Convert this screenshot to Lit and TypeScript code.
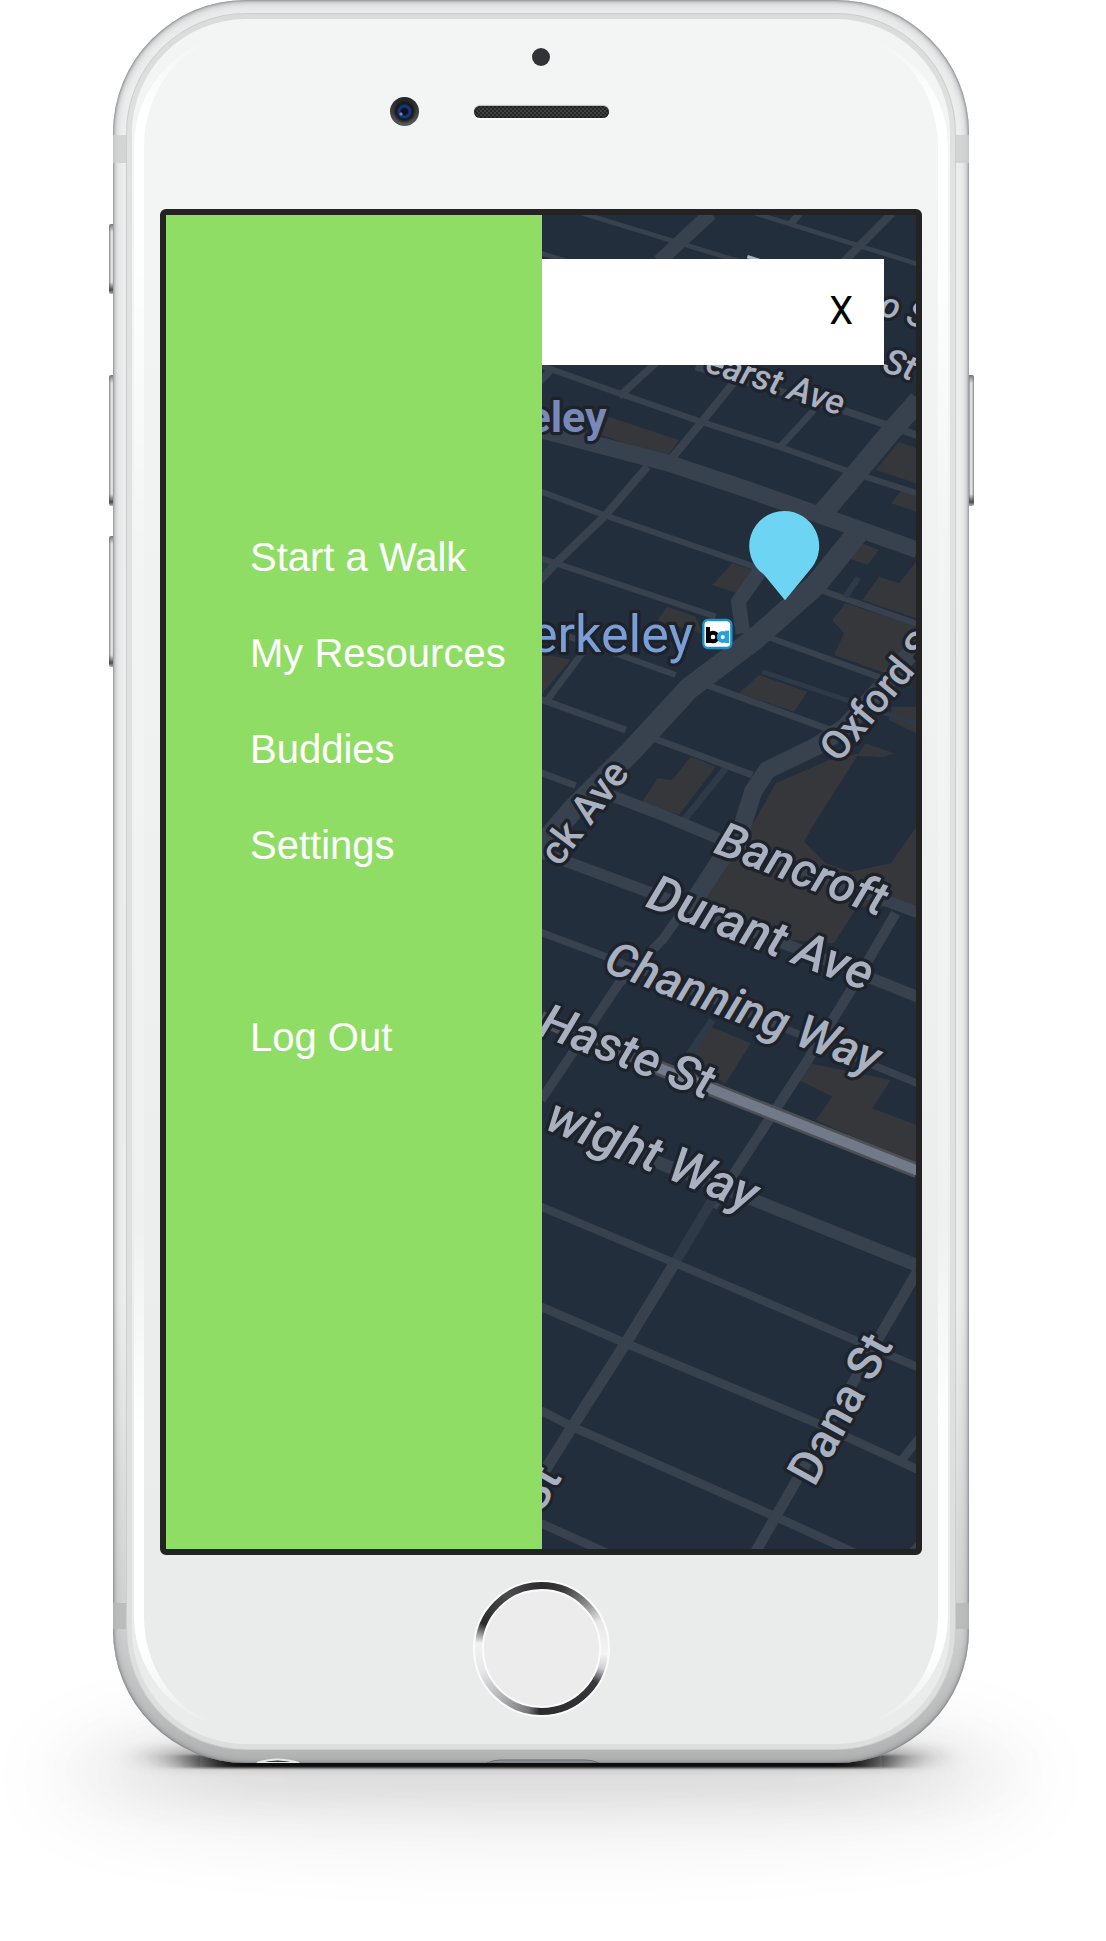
import { LitElement, html, css, svg } from "lit";
import { customElement } from "lit/decorators.js";

interface Road {
  d: string;
  w: number;
  faint?: boolean;
}

interface Label {
  text: string;
  x: number;
  y: number;
  angle: number;
  size: number;
  end?: boolean;
  kind?: string;
}

const BLOCKS: string[] = [
  "240,650 450,720 415,770 215,705",
  "1110,725 1162,745 1162,850 1040,810",
  "1125,860 1162,875 1162,935 1087,910",
  "610,1090 680,1112 625,1180 550,1155",
  "415,1220 500,1250 520,1300 385,1262",
  "1000,1030 1050,1050 1015,1095 960,1075",
  "1050,1130 1110,1150 1162,1085 1162,1255 1000,1200",
  "950,1210 1162,1280 1162,1330 1070,1420 915,1365 945,1300 910,1260",
  "690,1425 835,1475 795,1535 630,1480",
  "485,1670 560,1700 450,1845 340,1805 385,1735 430,1740",
  "36,1360 125,1380 36,1485",
  "1090,1520 1162,1520 1162,1600 1080,1560",
  "1010,1630 1095,1660 1060,1672 985,1668",
  "990,1660 850,1880 825,1925 890,1990 965,2015 1085,1990 1162,1880 1162,2120 985,2120 915,2230 790,2220 525,2100 600,1990 690,1840 740,1750 900,1680",
  "545,2480 665,2530 590,2650 475,2585",
  "840,2590 1085,2640 1030,2725 1162,2775 1162,2895 860,2760 910,2690 810,2640",
];

const ROADS: Road[] = [
  { d: "M160 40 700 205", w: 14 },
  { d: "M680 40 1165 192", w: 14 },
  { d: "M36 160 110 182", w: 14 },
  { d: "M545 40 390 185", w: 42 },
  { d: "M812 40 785 72", w: 22 },
  { d: "M1088 40 920 210", w: 24 },
  { d: "M70 505 30 548", w: 22 },
  { d: "M385 485 270 590", w: 22 },
  { d: "M665 485 515 670 420 785", w: 24 },
  { d: "M355 800 230 945 80 1090 30 1145", w: 24 },
  { d: "M855 630 752 742", w: 20 },
  { d: "M36 497 270 580 515 665 750 740 960 815 1165 880", w: 18 },
  { d: "M500 500 940 630 1165 706", w: 22 },
  { d: "M36 875 225 945 690 1105", w: 18 },
  { d: "M36 1075 560 1250", w: 18 },
  { d: "M860 1165 1165 1272", w: 18 },
  { d: "M700 1305 1060 1435", w: 18 },
  { d: "M120 1310 440 1425", w: 18 },
  { d: "M165 1352 55 1500", w: 20 },
  { d: "M520 1450 910 1592", w: 20 },
  { d: "M36 1498 290 1590", w: 20 },
  { d: "M360 1610 670 1725", w: 20 },
  { d: "M700 1415 980 1510 1165 1572", w: 14, faint: true },
  { d: "M988 1133 948 1192", w: 18, faint: true },
  { d: "M590 1705 465 1860", w: 20, faint: true },
  { d: "M550 2460 470 2580", w: 22, faint: true },
  { d: "M36 1718 140 1757", w: 20 },
  { d: "M230 1780 400 1845 560 1912 1165 2137", w: 34 },
  { d: "M60 1965 370 2080 790 2240 1165 2390", w: 34 },
  { d: "M36 2197 230 2270 790 2495 1165 2650", w: 22 },
  { d: "M36 690 420 790 660 870 900 955 1165 1050", w: 50 },
  { d: "M1170 600 1090 690 965 840 880 940", w: 62 },
  { d: "M985 1000 860 1155 680 1315 480 1465 310 1650 130 1830 20 1960", w: 66 },
  { d: "M710 1090 628 1205 642 1300", w: 44 },
  { d: "M1165 1335 1060 1460 950 1580 860 1640 715 1710 672 1775 640 1880 490 2110", w: 54 },
  { d: "M500 2080 400 2220 270 2350 130 2560 36 2700", w: 28 },
  { d: "M1100 2140 960 2380 830 2590 700 2790 550 3020", w: 30 },
  { d: "M550 3000 440 3185", w: 30, faint: true },
  { d: "M440 3185 290 3430 130 3680 36 3830", w: 34 },
  { d: "M330 2865 700 3010 1165 3197", w: 38 },
  { d: "M36 3020 440 3190 1165 3501", w: 24 },
  { d: "M36 3320 290 3430 860 3668 1165 3808", w: 26 },
  { d: "M36 3632 130 3680 740 3950 980 4060", w: 26 },
  { d: "M36 3970 240 4062", w: 26 },
  { d: "M1165 3215 1040 3430 740 3950 680 4055", w: 32 },
  { d: "M1170 3715 1112 3788", w: 26 },
  { d: "M1166 4030 1140 4056", w: 12 },
];

const LABELS: Label[] = [
  { text: "o S", x: 1046, y: 343, angle: 18, size: 106 },
  { text: "St", x: 1148, y: 543, angle: 18, size: 106, end: true },
  { text: "earst Ave", x: 934, y: 647, angle: 18, size: 106, end: true },
  { text: "eley", x: 233, y: 695, angle: 0, size: 129, end: true, kind: "city" },
  { text: "erkeley", x: 492, y: 1357, angle: 0, size: 156, end: true, kind: "station" },
  { text: "Oxford S", x: 928, y: 1692, angle: -50, size: 120, kind: "up" },
  { text: "ck Ave", x: 304, y: 1720, angle: -53, size: 120, end: true, kind: "up" },
  { text: "Bancroft", x: 550, y: 1957, angle: 21, size: 144 },
  { text: "Durant Ave", x: 346, y: 2119, angle: 21, size: 150 },
  { text: "Channing Way", x: 218, y: 2312, angle: 21, size: 141 },
  { text: "Haste St", x: 532, y: 2699, angle: 21, size: 147, end: true },
  { text: "wight Way", x: 662, y: 3036, angle: 22, size: 150, end: true },
  { text: "Dana St", x: 856, y: 3864, angle: -61, size: 141, kind: "up" },
  { text: "St", x: 100, y: 3832, angle: -60, size: 138, end: true, kind: "up" },
];

@customElement("street-map")
export class StreetMap extends LitElement {
  static styles = css`
    :host {
      display: block;
      overflow: hidden;
      background: #232e3c;
    }
    .canvas {
      display: block;
      width: 100%;
      height: 100%;
    }
    .block {
      fill: #35373b;
    }
    .park {
      fill: #243c3f;
    }
    .road {
      fill: none;
      stroke: #38424e;
      stroke-linejoin: round;
    }
    .faint {
      stroke: #2f3a49;
    }
    .route-edge {
      fill: none;
      stroke: #4d5156;
      stroke-width: 46;
    }
    .route {
      fill: none;
      stroke: #727988;
      stroke-width: 30;
    }
    .route-dim {
      stroke: #4c5057;
    }
    .label {
      font-family: Roboto, "Liberation Sans", sans-serif;
      font-weight: 500;
      font-style: italic;
      fill: #a9b1c1;
      stroke: #1e232b;
      stroke-width: 20;
      stroke-linejoin: round;
      paint-order: stroke;
    }
    .up {
      font-style: normal;
    }
    .city {
      font-style: normal;
      font-weight: 700;
      fill: #7889b7;
    }
    .station {
      font-style: normal;
      font-weight: 400;
      fill: #7a9fd6;
    }
    .speck {
      fill: none;
      stroke: #a9b1c1;
      stroke-width: 10;
    }
    .badge {
      fill: #fff;
      stroke: #1d93cb;
      stroke-width: 7;
    }
    .badge-b,
    .badge-a {
      fill: none;
      stroke: #000;
      stroke-width: 12;
    }
    .badge-a {
      stroke: #2c9fdb;
    }
    .pin {
      fill: #6dd5f3;
    }
  `;

  render() {
    return html`
      <svg class="canvas" viewBox="36 45 1125 4002" preserveAspectRatio="xMidYMid slice" role="img" aria-label="Street map">
        <polygon class="park" points="36,1080 68,1090 36,1118"></polygon>
        ${BLOCKS.map((p) => svg`<polygon class="block" points=${p}></polygon>`)}
        ${ROADS.map(
          (r) => svg`<path class=${r.faint ? "road faint" : "road"} d=${r.d} stroke-width=${r.w}></path>`
        )}
        <path class="route-edge" d="M36 2455 370 2596 600 2688 1165 2912"></path>
        <path class="route route-dim" d="M36 2455 370 2596"></path>
        <path class="route" d="M370 2596 600 2688 1165 2912"></path>
        <path class="speck" d="M655 170 700 184"></path>
        ${LABELS.map(
          (l) => svg`<text
            class=${"label " + (l.kind ?? "")}
            x=${l.x}
            y=${l.y}
            font-size=${l.size}
            text-anchor=${l.end ? "end" : "start"}
            transform=${`rotate(${l.angle} ${l.x} ${l.y})`}
          >${l.text}</text>`
        )}
        <rect class="badge" x="523" y="1260" width="84" height="84" rx="14"></rect>
        <path class="badge-b" d="M537 1281V1329"></path>
        <circle class="badge-b" cx="552" cy="1311" r="13"></circle>
        <circle class="badge-a" cx="581" cy="1311" r="12"></circle>
        <path class="badge-a" d="M594 1292V1329"></path>
        <path class="pin" d="M765 933A105 105 0 0 1 848 1103L768 1201 704 1123A105 105 0 0 1 765 933Z"></path>
      </svg>
    `;
  }
}

@customElement("side-menu")
export class SideMenu extends LitElement {
  static styles = css`
    :host {
      display: block;
      box-sizing: border-box;
      background: #90dd66;
      padding: 294px 0 0 84px;
    }
    .list {
      list-style: none;
      margin: 0;
      padding: 0;
    }
    .link {
      color: #fff;
      font: 40px/96px "Liberation Sans", Arial, sans-serif;
      text-decoration: none;
      white-space: nowrap;
    }
    .item {
      height: 96px;
    }
    .last {
      margin-top: 96px;
    }
  `;

  private items = ["Start a Walk", "My Resources", "Buddies", "Settings"];

  render() {
    return html`
      <nav>
        <ul class="list">
          ${this.items.map((t) => html`<li class="item"><a class="link" href="#">${t}</a></li>`)}
          <li class="item last"><a class="link" href="#">Log Out</a></li>
        </ul>
      </nav>
    `;
  }
}

@customElement("app-root")
export class AppRoot extends LitElement {
  static styles = css`
    :host {
      display: block;
      background: #fff;
    }
    .page {
      position: relative;
      isolation: isolate;
      overflow: hidden;
      padding: 0 137px 178px 113px;
    }
    .shadow {
      position: absolute;
      z-index: -1;
      left: 0;
      bottom: 0;
      width: 100%;
      height: 400px;
    }
    .phone {
      position: relative;
      padding: 13px;
      border-radius: 133px;
      background: linear-gradient(#e9eaea, #eceeee 120px, #eceeee 1300px, #cfd1d1 1620px, #b2b4b4);
      box-shadow: inset 0 0 3px #66676b, inset 0 0 9px #8e8f93;
    }
    .band {
      position: absolute;
      left: 0;
      right: 0;
      height: 28px;
      border: solid #cdd0cf;
      border-width: 0 13px;
      opacity: 0.8;
    }
    .band-top {
      top: 135px;
    }
    .band-bottom {
      bottom: 134px;
      height: 26px;
      border-color: #b7b9b8;
    }
    .key {
      position: absolute;
      z-index: -1;
      left: -4px;
      width: 8px;
      height: 131px;
      border-radius: 2px;
      background:
        linear-gradient(#77787c, transparent 8px calc(100% - 12px), #4b4c50 calc(100% - 4px), #b4b5b8),
        linear-gradient(90deg, #8b8c90, #f4f4f5 3px, #8e8f94 5px);
    }
    .mute {
      top: 224px;
      height: 70px;
    }
    .vol-up {
      top: 375px;
    }
    .vol-down {
      top: 536px;
    }
    .power {
      top: 375px;
      left: auto;
      right: -5px;
      transform: scaleX(-1);
    }
    .rim {
      position: relative;
      padding: 5px;
      border: 1px solid #cccece;
      border-radius: 120px;
      background: linear-gradient(#dadcdb, #e1e3e2 160px, #dddfde);
    }
    .face {
      position: relative;
      padding: 0 28px;
      border-radius: 114px;
      background: linear-gradient(#f4f4f4, #f3f4f4 160px, #f0f1f1 600px, #eaeceb 1500px, #eaeceb);
    }
    .gloss {
      position: absolute;
      inset: 15px 2px;
      border: solid #fff;
      border-width: 0 10px;
      border-radius: 112px;
      -webkit-mask-image: linear-gradient(#0000, #000 80px, #000 180px, #0003 500px, #0003 1200px, #000 1400px calc(100% - 80px), #0000);
      mask-image: linear-gradient(#0000, #000 80px, #000 180px, #0003 500px, #0003 1200px, #000 1400px calc(100% - 80px), #0000);
    }
    .head {
      display: grid;
      grid-template-rows: 18px 29px;
      grid-template-columns: 1fr 135px 1fr;
      gap: 31px 55px;
      align-items: center;
      justify-items: center;
      box-sizing: border-box;
      height: 190px;
      padding-top: 29px;
    }
    .sensor {
      grid-column: 2;
      width: 18px;
      height: 18px;
      border-radius: 50%;
      background: #323337;
    }
    .camera {
      grid-row: 2;
      justify-self: end;
      width: 29px;
      height: 29px;
      border-radius: 50%;
      background: radial-gradient(circle at 11px 17px, #6f8ac8 0 1px, transparent 2px),
        radial-gradient(circle at 50% 50%, #0b1226 0 3px, #1e3b7c 5px, #142a5c 7px, #151618 8px, transparent 12px),
        linear-gradient(#232425, #5a5a5b);
    }
    .speaker {
      grid-row: 2;
      width: 135px;
      height: 12px;
      border-radius: 6px;
      background: repeating-conic-gradient(#434343 0 25%, #262626 0 50%) 0 0 / 4px 4px;
      box-shadow: inset 0 0 3px #111, 0 -1px 1px #bbb, 0 2px 1px #fff;
    }
    .screen {
      display: grid;
      grid-template-columns: 1fr 1fr;
      aspect-ratio: 750 / 1334;
      border: 6px solid #232323;
      border-radius: 6px;
      background: #232e3c;
    }
    .menu {
      margin-right: -1px;
      z-index: 2;
    }
    .stage {
      display: grid;
      grid-template: 100% / 100%;
      min-height: 0;
    }
    .map,
    .bar {
      grid-area: 1 / 1;
      min-height: 0;
    }
    .bar {
      z-index: 1;
      display: flex;
      justify-content: flex-end;
      height: 106px;
      margin: 44px 32px 0 0;
      background: #fff;
    }
    .close {
      height: 104px;
      padding: 0 31px;
      border: 0;
      background: none;
      color: #000;
      font: 38px/44px Roboto, "Liberation Sans", sans-serif;
    }
    .foot {
      display: flex;
      justify-content: center;
      padding: 25px 0 27px;
    }
    .home {
      width: 137px;
      height: 137px;
      padding: 7px;
      border: 2px solid #fbfbfb;
      border-radius: 50%;
      background: conic-gradient(#2b2b2d, #3a3a3c 20deg, #8b8b8b 45deg, #e8e8e8 65deg, #f4f4f4 95deg, #d0d0d3 108deg, #37373b 122deg, #2b2b2d 182deg, #77777a 192deg, #b5b5b8 220deg, #e8e8ea 250deg, #f2f2f2 275deg, #2a2a2a 293deg, #4b4b4f 330deg, #2b2b2d);
    }
    .cap {
      display: block;
      box-sizing: border-box;
      width: 100%;
      height: 100%;
      border: 2px solid #fbfbfb;
      border-radius: 50%;
      background: #ebeceb;
    }
    .ports {
      position: absolute;
      left: 0;
      bottom: 0;
      width: 100%;
      height: 6px;
    }
  `;

  render() {
    return html`
      <main class="page">
        <svg class="shadow" viewBox="0 0 1106 400" preserveAspectRatio="none" aria-hidden="true">
          <defs>
            <filter id="wide" x="-30%" y="-200%" width="160%" height="500%"><feGaussianBlur stdDeviation="50 44"></feGaussianBlur></filter>
            <filter id="mid" x="-30%" y="-300%" width="160%" height="700%"><feGaussianBlur stdDeviation="70 26"></feGaussianBlur></filter>
            <filter id="contact" x="-20%" y="-300%" width="140%" height="700%"><feGaussianBlur stdDeviation="24 7"></feGaussianBlur></filter>
            <filter id="line" x="-20%" y="-100%" width="140%" height="300%"><feGaussianBlur stdDeviation="22 1"></feGaussianBlur></filter>
          </defs>
          <ellipse cx="541" cy="235" rx="490" ry="60" fill="#000" opacity="0.08" filter="url(#wide)"></ellipse>
          <rect x="150" y="205" width="782" height="46" fill="#000" opacity="0.11" filter="url(#mid)"></rect>
          <rect x="160" y="210" width="762" height="12" fill="#000" opacity="0.45" filter="url(#contact)"></rect>
          <rect x="200" y="214" width="682" height="13" fill="#111" filter="url(#line)"></rect>
        </svg>
        <div class="phone">
          <span class="key mute"></span>
          <span class="key vol-up"></span>
          <span class="key vol-down"></span>
          <span class="key power"></span>
          <span class="band band-top"></span>
          <span class="band band-bottom"></span>
          <svg class="ports" viewBox="0 0 856 6" aria-hidden="true">
            <path d="M144 6Q164 -1 186 6Z" fill="#3a3b3d" stroke="#e6e7e7" stroke-width="2"></path>
            <path d="M374 6Q380 3 388 3H472Q480 3 486 6Z" fill="#8e9093" stroke="#6b6d70"></path>
          </svg>
          <div class="rim">
            <div class="face">
              <span class="gloss"></span>
              <header class="head">
                <span class="sensor"></span>
                <span class="camera"></span>
                <span class="speaker"></span>
              </header>
              <section class="screen">
                <side-menu class="menu"></side-menu>
                <div class="stage">
                  <street-map class="map"></street-map>
                  <div class="bar"><button class="close" type="button">X</button></div>
                </div>
              </section>
              <footer class="foot">
                <button class="home" type="button" aria-label="Home"><span class="cap"></span></button>
              </footer>
            </div>
          </div>
        </div>
      </main>
    `;
  }
}
